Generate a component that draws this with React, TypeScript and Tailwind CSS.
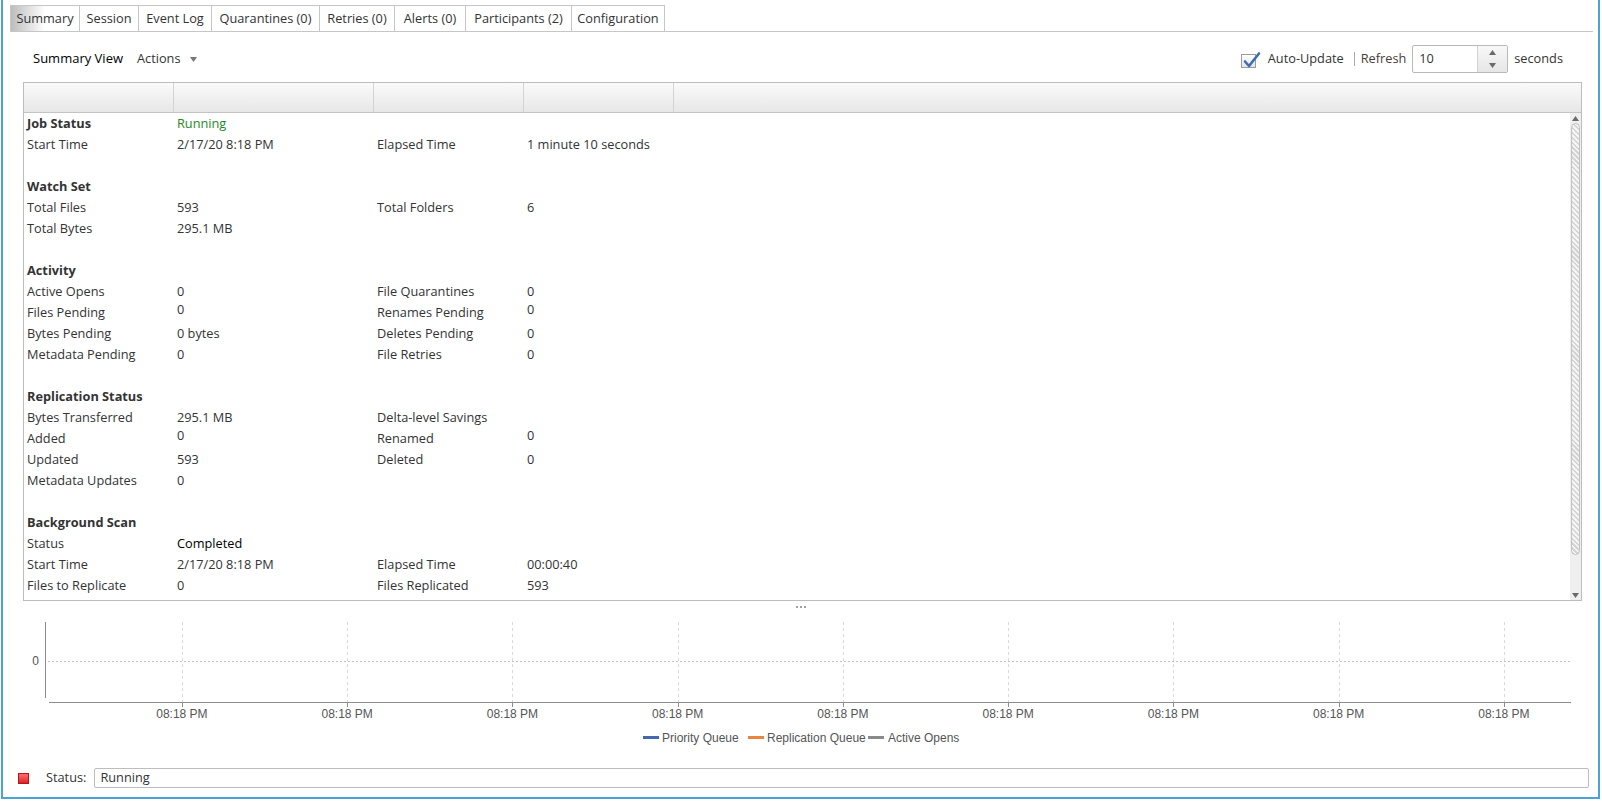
import React from "react";

type SummaryLine = {
  label: string;
  value?: string;
  label2?: string;
  value2?: string;
  heading?: boolean;
  tone?: "green" | "black";
  raised?: boolean;
};

const tabs = [
  { name: "Summary", width: "w-[70px]" },
  { name: "Session", width: "w-[59px]" },
  { name: "Event Log", width: "w-[73px]" },
  { name: "Quarantines (0)", width: "w-[108px]" },
  { name: "Retries (0)", width: "w-[75px]" },
  { name: "Alerts (0)", width: "w-[71px]" },
  { name: "Participants (2)", width: "w-[106px]" },
  { name: "Configuration", width: "w-[93px]" },
];

const summaryRows: (SummaryLine | null)[] = [
  { label: "Job Status", heading: true, value: "Running", tone: "green" },
  { label: "Start Time", value: "2/17/20 8:18 PM", label2: "Elapsed Time", value2: "1 minute 10 seconds" },
  null,
  { label: "Watch Set", heading: true },
  { label: "Total Files", value: "593", label2: "Total Folders", value2: "6" },
  { label: "Total Bytes", value: "295.1 MB" },
  null,
  { label: "Activity", heading: true },
  { label: "Active Opens", value: "0", label2: "File Quarantines", value2: "0" },
  { label: "Files Pending", value: "0", label2: "Renames Pending", value2: "0", raised: true },
  { label: "Bytes Pending", value: "0 bytes", label2: "Deletes Pending", value2: "0" },
  { label: "Metadata Pending", value: "0", label2: "File Retries", value2: "0" },
  null,
  { label: "Replication Status", heading: true },
  { label: "Bytes Transferred", value: "295.1 MB", label2: "Delta-level Savings" },
  { label: "Added", value: "0", label2: "Renamed", value2: "0", raised: true },
  { label: "Updated", value: "593", label2: "Deleted", value2: "0" },
  { label: "Metadata Updates", value: "0" },
  null,
  { label: "Background Scan", heading: true },
  { label: "Status", value: "Completed", tone: "black" },
  { label: "Start Time", value: "2/17/20 8:18 PM", label2: "Elapsed Time", value2: "00:00:40" },
  { label: "Files to Replicate", value: "0", label2: "Files Replicated", value2: "593" },
];

// x positions of the time ticks on the chart
const tickXs = Array.from({ length: 9 }, (_, i) => 178.9 + 165.25 * i);

function SummaryRow({ row }: { row: SummaryLine | null }) {
  if (!row) return <div className="h-[21px]" />;
  const toneClass =
    row.tone === "green" ? "text-[#23891f]" : row.tone === "black" ? "text-black" : "";
  const valuePad = row.raised ? "pb-[6px]" : "";
  return (
    <div className="flex h-[21px] items-center whitespace-nowrap">
      <div className={`flex h-full w-[150px] items-center pl-[3px] ${row.heading ? "font-bold" : ""}`}>
        {row.label}
      </div>
      <div className={`flex h-full w-[200px] items-center pl-[3px] ${toneClass} ${valuePad}`}>{row.value}</div>
      <div className="flex h-full w-[150px] items-center pl-[3px]">{row.label2}</div>
      <div className={`flex h-full w-[150px] items-center pl-[3px] ${valuePad}`}>{row.value2}</div>
    </div>
  );
}

function Triangle({ up }: { up?: boolean }) {
  return (
    <svg width="7" height="5" viewBox="0 0 7 5" className="block">
      <path d={up ? "M0 5 L3.5 0 L7 5 Z" : "M0 0 L7 0 L3.5 5 Z"} fill="#6a6a6a" />
    </svg>
  );
}

function Toolbar() {
  return (
    <div className="mt-[13px] flex h-[28px] items-center pl-[30px] pr-[35px]">
      <span className="text-[13px] text-black">Summary View</span>
      <span className="ml-[14px] text-[#333]">Actions</span>
      <span className="ml-[9px]">
        <svg width="7" height="5" viewBox="0 0 7 5" className="block">
          <path d="M0 0 L7 0 L3.5 5 Z" fill="#777" />
        </svg>
      </span>

      <div className="ml-auto flex items-center">
        <svg width="21" height="19" viewBox="0 0 21 19" className="block">
          <defs>
            <linearGradient id="cbx" x1="0" y1="0" x2="0" y2="1">
              <stop offset="0" stopColor="#ffffff" />
              <stop offset="1" stopColor="#e4e4e4" />
            </linearGradient>
          </defs>
          <rect x="1.5" y="4.5" width="14" height="13" fill="url(#cbx)" stroke="#9c9c9c" />
          <path d="M5 11.5 L9 16 L19 3.5" fill="none" stroke="#3f6db4" strokeWidth="2.6" strokeLinecap="round" strokeLinejoin="round" />
        </svg>
        <span className="ml-[7px] text-[#333]">Auto-Update</span>
        <span className="ml-[10px] h-[14px] w-px bg-[#a8a8a8]" />
        <span className="ml-[6px] text-[#4a4038]">Refresh</span>
        <div className="ml-[6px] flex h-[28px] w-[96px] rounded-[2px] border border-[#b9b9b9] bg-white">
          <div className="flex flex-1 items-center pl-[6px] text-[#333]">10</div>
          <div className="flex w-[30px] flex-col border-l border-[#d2d2d2] bg-gradient-to-b from-[#f8f8f8] to-[#e6e6e6]">
            <div className="flex flex-1 items-center justify-center">
              <Triangle up />
            </div>
            <div className="flex flex-1 items-center justify-center">
              <Triangle />
            </div>
          </div>
        </div>
        <span className="ml-[6px] text-[#333]">seconds</span>
      </div>
    </div>
  );
}

function SummaryGrid() {
  return (
    <div className="mt-[9px] ml-[20px] flex h-[519px] w-[1559px] flex-col border border-[#bdbdbd]">
      <div className="flex h-[30px] border-b border-[#c4c4c4] bg-gradient-to-b from-[#fafafa] to-[#e7e7e7]">
        <div className="w-[150px] border-r border-[#d3d3d3]" />
        <div className="w-[200px] border-r border-[#d3d3d3]" />
        <div className="w-[150px] border-r border-[#d3d3d3]" />
        <div className="w-[150px] border-r border-[#d3d3d3]" />
        <div className="flex-1" />
      </div>
      <div className="flex min-h-0 flex-1">
        <div className="flex-1 overflow-hidden">
          {summaryRows.map((row, i) => (
            <SummaryRow key={i} row={row} />
          ))}
        </div>
        {/* scrollbar */}
        <div className="flex w-[11px] flex-col items-center bg-[#efefef]">
          <div className="flex h-[10px] items-center justify-center">
            <Triangle up />
          </div>
          <div className="h-[432px] w-[9px] rounded-full border border-[#c2c2c2] bg-[repeating-linear-gradient(45deg,#d4d4d4_0px,#d4d4d4_1.5px,#f4f4f4_1.5px,#f4f4f4_3.5px)]" />
          <div className="flex-1" />
          <div className="flex h-[10px] items-center justify-center">
            <Triangle />
          </div>
        </div>
      </div>
    </div>
  );
}

function QueueChart() {
  const font = "'Liberation Sans', Arial, sans-serif";
  return (
    <svg width="1595" height="140" viewBox="0 0 1595 140" className="block">
      {/* y axis and zero line */}
      <line x1="42.5" y1="9" x2="42.5" y2="85" stroke="#8c8c8c" />
      <line x1="45" y1="48.5" x2="1568" y2="48.5" stroke="#c4c4c4" strokeDasharray="2 2" />
      <text x="36" y="48" textAnchor="end" dominantBaseline="central" fontFamily={font} fontSize="12" fill="#555">
        0
      </text>

      {tickXs.map((x) => {
        const px = Math.round(x) + 0.5;
        return (
          <g key={x}>
            <line x1={px} y1="9" x2={px} y2="89" stroke="#dadada" strokeDasharray="3 3" />
            <line x1={px} y1="89" x2={px} y2="94" stroke="#8c8c8c" />
            <text x={x} y="101" textAnchor="middle" dominantBaseline="central" fontFamily={font} fontSize="12" fill="#555">
              08:18 PM
            </text>
          </g>
        );
      })}

      {/* x axis */}
      <line x1="46" y1="89.5" x2="1568" y2="89.5" stroke="#8c8c8c" />

      {/* legend */}
      <rect x="640" y="123" width="16" height="3" fill="#4468b0" />
      <text x="659" y="124.5" dominantBaseline="central" fontFamily={font} fontSize="12" fill="#555">
        Priority Queue
      </text>
      <rect x="745" y="123" width="16" height="3" fill="#e8853f" />
      <text x="764" y="124.5" dominantBaseline="central" fontFamily={font} fontSize="12" fill="#555">
        Replication Queue
      </text>
      <rect x="865" y="123" width="16" height="3" fill="#8a8a8a" />
      <text x="885" y="124.5" dominantBaseline="central" fontFamily={font} fontSize="12" fill="#555">
        Active Opens
      </text>
    </svg>
  );
}

export default function App() {
  return (
    <div className="h-[801px] w-[1602px] overflow-hidden bg-white font-['Open_Sans',Arial,sans-serif] text-[12.75px] text-[#333]">
      <div className="ml-px flex h-[799px] w-[1599px] flex-col border-x-2 border-b-2 border-[#4aa3d8]">
        {/* Tabs */}
        <div className="mt-[5px] ml-[7px] mr-[5px] flex h-[27px] border-b border-[#c6c6c6]">
          {tabs.map((tab, i) => (
            <div
              key={tab.name}
              className={`flex h-[26px] shrink-0 items-center justify-center whitespace-nowrap border-t border-r border-[#c6c6c6] ${tab.width} ${
                i === 0 ? "border-l bg-gradient-to-r from-[#bdbdbd] via-white to-white" : "bg-white"
              }`}
            >
              {tab.name}
            </div>
          ))}
        </div>

        <Toolbar />
        <SummaryGrid />

        {/* splitter grip */}
        <div className="flex h-[12px] items-center justify-center gap-[2px]">
          <span className="h-[2px] w-[2px] bg-[#a0a0a0]" />
          <span className="h-[2px] w-[2px] bg-[#a0a0a0]" />
          <span className="h-[2px] w-[2px] bg-[#a0a0a0]" />
        </div>

        <QueueChart />

        {/* Status */}
        <div className="mt-[15px] flex h-[20px] items-center">
          <span className="ml-[15px] h-[11px] w-[11px] border border-[#b5151c] bg-gradient-to-b from-[#ff6a6a] to-[#dc1f25]" />
          <span className="ml-[17px] text-[#333]">Status:</span>
          <div className="ml-[8px] mr-[9px] flex h-[20px] flex-1 items-center rounded-[2px] border border-[#bdbdbd] pl-[5px] text-[#333]">
            Running
          </div>
        </div>
      </div>
    </div>
  );
}
